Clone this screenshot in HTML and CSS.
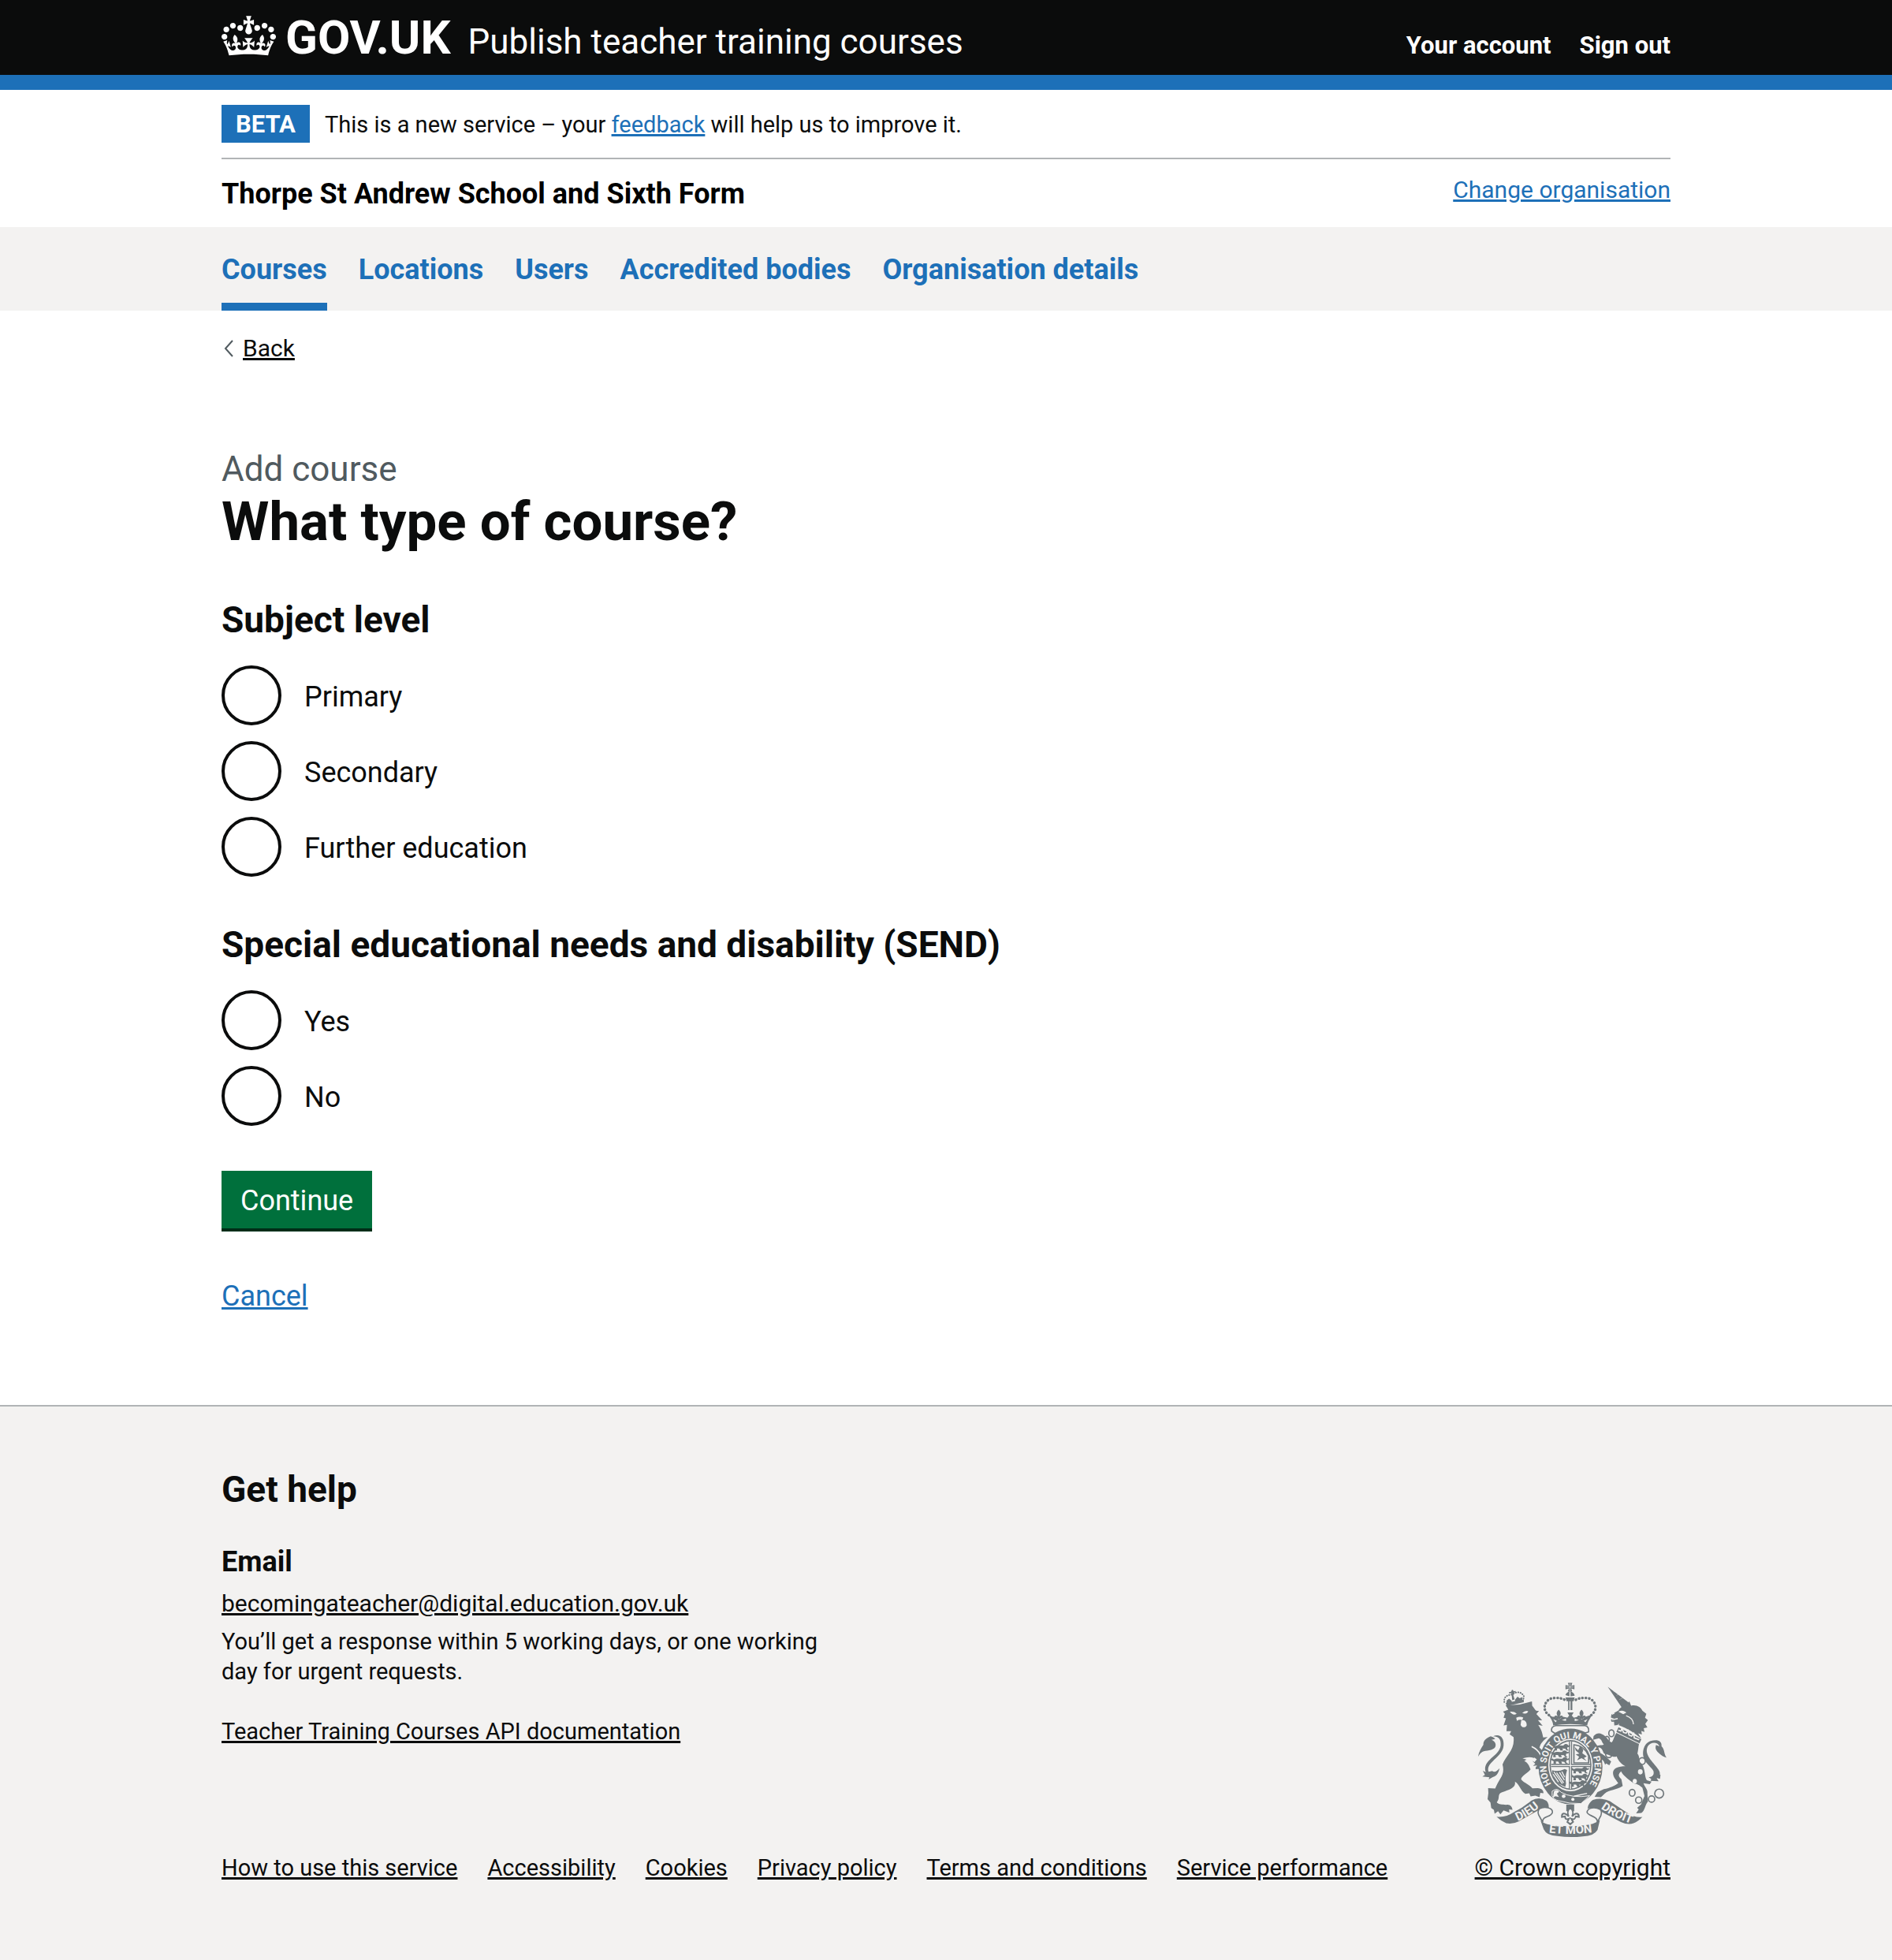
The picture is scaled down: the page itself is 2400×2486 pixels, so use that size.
FILE: index.html
```html
<!DOCTYPE html>
<html lang="en">
<head>
<meta charset="utf-8">
<meta name="viewport" content="width=device-width, initial-scale=1">
<title>What type of course? - Publish teacher training courses</title>
<link rel="stylesheet" href="styles.css">
</head>
<body>
<header class="header">
  <div class="container header-inner">
    <svg class="header-crown" viewBox="0 0 132 97" aria-hidden="true"><path fill="currentColor" fill-rule="evenodd" d="M25 30.2c3.5 1.5 7.7-.2 9.1-3.7 1.5-3.6-.2-7.8-3.9-9.2-3.6-1.4-7.6.3-9.1 3.9-1.4 3.5.3 7.5 3.9 9zM9 39.5c3.6 1.5 7.8-.2 9.2-3.7 1.5-3.6-.2-7.8-3.9-9.1-3.6-1.5-7.6.2-9.1 3.8-1.4 3.5.3 7.5 3.8 9zM4.4 57.2c3.5 1.5 7.7-.2 9.1-3.8 1.5-3.6-.2-7.7-3.9-9.1-3.5-1.5-7.6.3-9.1 3.8-1.4 3.5.3 7.6 3.9 9.1zm38.3-21.4c3.5 1.5 7.7-.2 9.1-3.8 1.5-3.6-.2-7.7-3.9-9.1-3.6-1.5-7.6.3-9.1 3.8-1.3 3.6.4 7.7 3.9 9.1zm64.4-5.6c-3.6 1.5-7.8-.2-9.1-3.7-1.5-3.6.2-7.8 3.8-9.2 3.6-1.4 7.7.3 9.2 3.9 1.3 3.5-.4 7.5-3.9 9zm15.9 9.3c-3.6 1.5-7.7-.2-9.1-3.7-1.5-3.6.2-7.8 3.7-9.1 3.6-1.5 7.7.2 9.2 3.8 1.5 3.5-.3 7.5-3.8 9zm4.7 17.7c-3.6 1.5-7.8-.2-9.2-3.8-1.5-3.6.2-7.7 3.9-9.1 3.6-1.5 7.7.3 9.2 3.8 1.3 3.5-.4 7.6-3.9 9.1zM89.3 35.8c-3.6 1.5-7.8-.2-9.2-3.8-1.4-3.6.2-7.7 3.9-9.1 3.6-1.5 7.7.3 9.2 3.8 1.4 3.6-.3 7.7-3.9 9.1zM69.7 17.7l8.9 4.7V9.3l-8.9 2.8c-.2-.3-.5-.6-.9-.9L72.4 0H59.6l3.5 11.2c-.3.3-.6.5-.9.9l-8.8-2.8v13.1l8.8-4.7c.3.3.6.7.9.9l-5 15.4v.1c-.2.8-.4 1.6-.4 2.4 0 4.1 3.1 7.5 7 8.1h.2c.3 0 .7.1 1 .1.4 0 .7 0 1-.1h.2c4-.6 7.1-4.1 7.1-8.1 0-.8-.1-1.7-.4-2.4V34l-5.1-15.4c.4-.2.7-.6 1-.9zM66 92.8c16.9 0 32.8 1.1 47.1 3.2 4-16.9 8.9-26.7 14-33.5l-9.6-3.4c1 4.9 1.1 7.2 0 10.2-1.5-1.4-3-4.3-4.2-8.7L108.6 76c2.8-2 5-3.2 7.5-3.3-4.4 9.4-10 11.9-13.6 11.2-4.3-.8-6.3-4.6-5.6-7.9 1-4.7 5.7-5.9 8-.5 4.3-8.7-3-11.4-7.6-8.8 7.1-7.2 7.9-13.5 2.1-21.1-8 6.1-8.1 12.3-4.5 20.8-4.7-5.4-12.1-2.5-9.5 6.2 3.4-5.2 7.9-2 7.2 3.1-.6 4.3-6.4 7.8-13.5 7.2-10.3-.9-10.9-8-11.2-13.8 2.5-.5 7.1 1.8 11 7.3L80.2 60c-4.1 4.4-8 5.3-12.3 5.4 1.4-4.4 8-11.6 8-11.6H55.5s6.4 7.2 7.9 11.6c-4.2-.1-8-1-12.3-5.4l1.4 16.4c3.9-5.5 8.5-7.7 10.9-7.3-.3 5.8-.9 12.8-11.1 13.8-7.2.6-12.9-2.9-13.5-7.2-.7-5 3.8-8.3 7.1-3.1 2.7-8.7-4.6-11.6-9.4-6.2 3.7-8.5 3.6-14.7-4.6-20.8-5.8 7.6-5 13.9 2.2 21.1-4.7-2.6-11.9.1-7.7 8.8 2.3-5.5 7.1-4.2 8.1.5.7 3.3-1.3 7.1-5.7 7.9-3.5.7-9-1.8-13.5-11.2 2.5.1 4.7 1.3 7.5 3.3l-4.7-15.4c-1.2 4.4-2.7 7.2-4.3 8.7-1.1-3-.9-5.3 0-10.2l-9.5 3.4c5 6.9 9.9 16.7 14 33.5 14.8-2.1 30.8-3.2 47.7-3.2z"/></svg>
    <a class="header-logo" href="#">GOV.UK</a>
    <a class="header-service" href="#">Publish teacher training courses</a>
    <nav class="header-nav" aria-label="Account">
      <a href="#">Your account</a>
      <a href="#">Sign out</a>
    </nav>
  </div>
</header>

<div class="container">
  <div class="phase">
    <strong class="phase-tag">BETA</strong>
    <span>This is a new service – your <a class="link" href="#">feedback</a> will help us to improve it.</span>
  </div>
  <div class="organisation">
    <span class="organisation-name">Thorpe St Andrew School and Sixth Form</span>
    <a class="link organisation-change" href="#">Change organisation</a>
  </div>
</div>

<nav class="primary-nav" aria-label="Primary">
  <ul class="container primary-nav-list">
    <li><a class="primary-nav-link is-current" href="#" aria-current="page">Courses</a></li>
    <li><a class="primary-nav-link" href="#">Locations</a></li>
    <li><a class="primary-nav-link" href="#">Users</a></li>
    <li><a class="primary-nav-link" href="#">Accredited bodies</a></li>
    <li><a class="primary-nav-link" href="#">Organisation details</a></li>
  </ul>
</nav>

<div class="container main-wrapper">
  <div class="back">
    <svg class="back-icon" viewBox="0 0 12 22" aria-hidden="true"><path d="M11 1 2 11l9 10" fill="none" stroke="currentColor" stroke-width="2"/></svg>
    <a class="link link-dark" href="#">Back</a>
  </div>
  <main>
    <form>
      <h1 class="title"><span class="title-caption">Add course</span>What type of course?</h1>
      <fieldset class="fieldset">
        <legend class="legend">Subject level</legend>
        <div class="radios">
          <div class="radio"><input type="radio" name="level" id="primary"><label for="primary">Primary</label></div>
          <div class="radio"><input type="radio" name="level" id="secondary"><label for="secondary">Secondary</label></div>
          <div class="radio"><input type="radio" name="level" id="further"><label for="further">Further education</label></div>
        </div>
      </fieldset>
      <fieldset class="fieldset">
        <legend class="legend">Special educational needs and disability (SEND)</legend>
        <div class="radios">
          <div class="radio"><input type="radio" name="send" id="send-yes"><label for="send-yes">Yes</label></div>
          <div class="radio"><input type="radio" name="send" id="send-no"><label for="send-no">No</label></div>
        </div>
      </fieldset>
      <button class="button" type="submit">Continue</button>
      <p class="cancel"><a class="link" href="#">Cancel</a></p>
    </form>
  </main>
</div>

<footer class="footer">
  <div class="container footer-grid">
    <div class="footer-main">
      <h2 class="footer-title">Get help</h2>
      <h3 class="footer-subtitle">Email</h3>
      <ul class="footer-list">
        <li class="footer-email"><a class="link link-dark" href="#">becomingateacher@digital.education.gov.uk</a></li>
        <li>You’ll get a response within 5 working days, or one working day for urgent requests.</li>
      </ul>
      <p class="footer-api"><a class="link link-dark" href="#">Teacher Training Courses API documentation</a></p>
      <ul class="footer-links">
        <li><a class="link link-dark" href="#">How to use this service</a></li>
        <li><a class="link link-dark" href="#">Accessibility</a></li>
        <li><a class="link link-dark" href="#">Cookies</a></li>
        <li><a class="link link-dark" href="#">Privacy policy</a></li>
        <li><a class="link link-dark" href="#">Terms and conditions</a></li>
        <li><a class="link link-dark" href="#">Service performance</a></li>
      </ul>
    </div>
    <div class="footer-copyright">
      <svg class="arms" viewBox="72 44 718 588" aria-hidden="true">
        <defs>
          <path id="motto-left" d="M207 577Q264 558 318 508"/>
          <path id="motto-mid" d="M330 614Q424 627 518 613"/>
          <path id="motto-right" d="M531 517Q583 558 665 584"/>
          <path id="garter-text" d="M362 444A92 108 0 1 1 486 444"/>
          <g id="lily"><path d="M0-19C-11-9-8 0-3 6C-13 0-19 5-15 15C-11 10-7 11-5 17H5C7 11 11 10 15 15C19 5 13 0 3 6C8 0 11-9 0-19Z"/></g>
          <path id="passant" d="M-33-3C-37-10-28-12-25-6C-15-12-3-9 8-9C14-18 24-16 27-9L34-11L32-4L24-3L22 4L30 10H20L15 3L4 2L7 10H-3L-8 2L-17 2L-16 10H-26L-25 1Z"/>
        </defs>
        <g fill="currentColor" stroke="none">
          <!-- lion: tail, body, legs -->
          <path d="M72 326C74 310 83 295 92 281C91 265 103 257 113 252L120 249L128 252L137 258C132 262 127 261 123 262C137 267 142 279 137 290C129 304 101 302 88 308C81 312 77 319 72 326Z"/>
          <path d="M129 249C155 237 172 255 169 285C165 330 99 348 112 384L126 381C135 389 147 378 154 370C150 384 146 399 128 404L112 413L115 405L88 402L98 396L90 380L101 385C86 338 154 325 158 283C160 260 149 249 129 249Z"/>
          <path d="M177 131L230 128L277 116L278 132C290 144 287 153 304 152L294 164L316 188L300 187L318 209L301 205C315 225 317 239 320 253L337 252C322 264 309 276 306 292C322 306 330 322 336 338L329 386L318 380L309 385L304 373L291 373L293 359L283 352L300 340L287 330L275 338L268 329L248 343C262 349 266 360 272 375C258 392 236 400 236 413C249 428 266 431 279 447L299 446C315 447 321 455 321 466L309 464L306 481L290 475L272 478L267 466L252 468C231 453 232 433 212 421C218 445 191 452 163 462C143 469 157 486 143 500C151 511 163 507 179 510C194 507 202 517 203 529L190 527L191 539L169 531L157 546L148 534L135 544L132 529L122 522L119 501L108 488L111 465L110 446L137 448C152 408 176 397 165 356C177 322 213 302 207 252L192 241L198 229L180 229L182 205L169 207L178 180L169 178L174 162L167 155L187 147Z"/>
          <path d="M276 288C294 296 303 306 311 321" fill="none" stroke="#f3f2f1" stroke-width="5"/>
          <g fill="#f3f2f1"><path d="M193 155Q209 153 219 162Q207 173 193 155ZM240 160Q252 148 263 153Q258 166 240 160ZM217 178Q231 171 244 177L240 187Q229 183 220 190ZM236 189C249 183 258 195 257 207C253 218 237 216 234 205Z"/><path d="M241 333Q278 320 299 341Q317 359 295 365Q272 357 280 346Q265 340 241 333Z"/></g>
          <path d="M295 337L287 347L278 342L290 354L281 361L296 360L292 375L309 362L318 373L323 338L304 327Z"/>
          <!-- lion's crown -->
          <path d="M172 118Q168 93 199 90Q231 70 246 95L246 110L181 126Z" fill="#f3f2f1"/>
          <path d="M177 122L246 108L246 119L181 134Z"/>
          <path d="M172 118Q168 93 199 90Q231 70 246 95Q247 103 242 110" fill="none" stroke="currentColor" stroke-width="6" stroke-dasharray="1 8" stroke-linecap="round"/>
          <path d="M198 77L204 73L209 79L204 85L211 108L202 111ZM181 112L190 105L199 113L201 118L180 123ZM213 109L222 98L230 104L241 99L240 112L212 118Z"/>
          <path d="M190 83L215 78M202 72L206 91" stroke="currentColor" stroke-width="5"/>

          <!-- unicorn: horn, head, mane, body, tail -->
          <path d="M566 60L650 123L622 143Z"/>
          <path d="M588 79L599 73M599 93L614 84M610 109L630 99" stroke="#f3f2f1" stroke-width="1"/>
          <path d="M648 115L655 132C675 127 693 138 698 151L713 163L708 178L719 187L709 201L717 215L703 218L706 232L694 228L696 242L682 237L694 258C666 234 638 217 607 206L611 199L603 206L591 207L590 193H580L578 185L590 181L578 177L580 165L607 150C616 135 631 131 642 128Z"/>
          <path d="M582 165L592 160M582 186L604 181M611 155Q623 150 633 158L625 162Z" stroke="#f3f2f1" stroke-width="4" fill="#f3f2f1"/>
          <path d="M636 170Q663 179 664 203" fill="none" stroke="#f3f2f1" stroke-width="4"/>
          <path d="M607 214L694 260L687 276L599 232Z"/>
          <path d="M606 225L616 229L620 218L626 234L636 237L643 227L647 244L657 248L665 238L667 255L686 262" fill="none" stroke="#f3f2f1" stroke-width="5"/>
          <path d="M599 236L685 278C682 292 682 303 679 315C690 327 682 342 693 351C711 371 705 410 717 417L733 421L726 431L702 427C708 444 719 450 717 466L719 498C708 508 709 531 694 541L674 542L684 527L678 521L693 508L706 476L698 445C679 425 670 433 660 424C638 407 625 398 617 382C604 393 606 402 618 412L623 438C600 454 571 452 554 467L540 481L516 479L527 461L551 450C576 444 591 438 606 427C592 409 586 401 586 387C587 369 609 363 633 363C612 350 604 337 600 325C585 331 574 318 555 316C547 315 548 291 530 291L534 311C554 319 565 333 579 345L572 359L560 352L556 357L551 345C538 327 519 325 520 310L519 288C536 279 543 284 551 280C541 268 545 262 532 256L510 262L512 248C522 235 536 236 543 240C560 246 567 266 581 272C588 265 590 249 599 236Z"/>
          <path d="M706 338C695 316 700 277 729 267C755 259 773 266 771 287C784 298 779 316 790 330C774 326 766 317 755 307C747 299 747 291 750 282L763 287C755 267 727 271 718 288C702 323 746 351 763 382C771 400 751 411 739 416L722 405C736 404 744 396 740 381C733 367 716 357 706 338Z"/>
          <path d="M752 388L767 396L765 411L751 407L760 420L729 418L737 399Z"/>
          <!-- chain -->
          <g fill="none" stroke="currentColor" stroke-width="5"><ellipse cx="580" cy="237" rx="10" ry="13"/><ellipse cx="563" cy="261" rx="9" ry="12"/><circle cx="570" cy="318" r="12"/><ellipse cx="697" cy="343" rx="12" ry="13"/><ellipse cx="659" cy="464" rx="11" ry="13"/><circle cx="684" cy="492" r="12"/><circle cx="733" cy="488" r="12"/><circle cx="762" cy="467" r="17"/></g>
          <g fill="#f3f2f1"><ellipse cx="690" cy="384" rx="9" ry="10"/><ellipse cx="669" cy="420" rx="8" ry="9"/><circle cx="697" cy="343" r="8"/></g>

          <!-- garter and shield -->
          <ellipse cx="424" cy="364" rx="122" ry="144"/>
          <ellipse cx="424" cy="358" rx="85" ry="100" fill="#f3f2f1"/>
          <ellipse cx="424" cy="358" rx="80" ry="95"/>
          <ellipse cx="424" cy="358" rx="75" ry="90" fill="#f3f2f1"/>
          <path d="M350 360H499M424 268V450" stroke="currentColor" stroke-width="12"/>
          <path d="M350 360H499M424 268V450" stroke="#f3f2f1" stroke-width="4"/>
          <use href="#passant" transform="translate(389 293)"/><use href="#passant" transform="translate(384 318)"/><use href="#passant" transform="translate(385 343)"/>
          <use href="#passant" transform="translate(461 380)"/><use href="#passant" transform="translate(461 406)"/><use href="#passant" transform="translate(453 431)"/>
          <path d="M437 281Q476 284 493 323V350H437Z" fill="none" stroke="currentColor" stroke-width="5"/>
          <path d="M440 289L453 302L461 286L473 300L469 313L486 325L475 331L486 343L466 332L449 340L457 327L444 318L458 315L444 303Z"/>
          <path d="M354 378Q377 385 402 373L411 377Q402 405 407 429L404 442L378 429Q354 410 354 378Z"/>
          <path d="M361 384L393 429M371 387L398 426M382 386L401 416M391 383L402 405M358 393L378 423" fill="none" stroke="#f3f2f1" stroke-width="4"/>
          <!-- belt -->
          <path d="M354 458Q374 442 388 462Q430 486 497 475L464 505Q420 507 379 494Q361 491 354 475Z" stroke="#f3f2f1" stroke-width="3"/>
          <path d="M361 458Q374 449 381 460L372 467L380 480L366 477L357 483Z" fill="#f3f2f1"/>
          <circle cx="398" cy="477" r="7" fill="#f3f2f1"/><circle cx="433" cy="489" r="6" fill="#f3f2f1"/>
          <path d="M437 477L487 466" stroke="#f3f2f1" stroke-width="4"/>
          <text class="arms-garter"><textPath href="#garter-text" startOffset="50%">HON SOIT QUI MAL Y PENSE</textPath></text>

          <!-- royal crown -->
          <path d="M352 229Q349 211 368 208L479 208Q496 211 493 232L480 236Q424 207 365 238Z" fill="#f3f2f1" stroke="currentColor" stroke-width="5"/>
          <path d="M340 166L355 174L367 174L379 185L396 174L414 178L424 170L436 178L451 174L467 185L481 174L506 166C498 184 489 193 488 207Q424 197 358 207C357 190 347 179 340 166Z"/>
          <g fill="#f3f2f1"><path d="M358 183L372 190L367 195ZM391 187L407 181V190ZM440 181L456 187L440 191ZM475 190L489 183L481 195Z"/></g>
          <use href="#lily" transform="translate(379 166)"/><use href="#lily" transform="translate(466 166)"/>
          <path d="M412 158H436L429 170L438 179L424 176L411 179L419 170Z"/>
          <path d="M342 168C309 144 330 104 360 103Q385 100 405 111M503 168C534 144 516 104 486 103Q461 100 441 111" fill="none" stroke="currentColor" stroke-width="10" stroke-dasharray="1 12" stroke-linecap="round"/>
          <path d="M405 101H440L436 115H409ZM415 115H431V149H415ZM405 92Q408 80 422 78Q438 80 440 94L422 97Z"/>
          <path d="M422 115V149M422 78V98" stroke="#f3f2f1" stroke-width="4"/>
          <path d="M414 45H431L427 56L439 53V70L427 66L430 78H414L418 66L405 70V53L418 56Z"/>
          <path d="M422 48V76M408 61H436" stroke="#f3f2f1" stroke-width="2"/>

          <!-- scrolls -->
          <path d="M408 509H438V534H408Z"/>
          <path d="M423 522C409 532 413 544 417 554C401 538 390 541 391 556L403 554Q404 569 418 563L412 575L423 584L434 575L427 563Q441 569 444 554L456 556C456 541 444 538 430 554C434 544 438 532 423 522Z" fill="#f3f2f1" stroke="currentColor" stroke-width="6"/>
          <path d="M142 555Q178 559 208 538Q247 518 274 494Q304 477 332 494Q343 504 341 525Q329 517 313 524L226 573Q203 585 179 580Q160 572 142 555Z"/>
          <path d="M305 525C325 514 358 521 355 539C349 559 315 550 318 576L303 549C298 538 301 531 305 525Z" fill="#f3f2f1" stroke="currentColor" stroke-width="5"/>
          <path d="M698 556Q670 560 640 540L574 496Q545 481 509 491Q492 502 489 524Q503 519 523 526L616 575Q644 588 664 580Q682 574 698 556Z"/>
          <path d="M537 527C515 516 490 521 487 537C488 553 530 552 526 577L540 550C544 538 542 532 537 527Z" fill="#f3f2f1" stroke="currentColor" stroke-width="5"/>
          <path d="M310 570Q330 588 370 588Q424 595 474 588Q512 586 536 568L527 605Q514 628 471 630Q424 636 374 629Q333 627 322 603Z"/>
        </g>
        <g class="arms-motto">
          <text><textPath href="#motto-left" startOffset="50%">DIEU</textPath></text>
          <text><textPath href="#motto-mid" startOffset="50%">ET MON</textPath></text>
          <text><textPath href="#motto-right" startOffset="50%">DROIT</textPath></text>
        </g>
      </svg>
      <a class="link link-dark" href="#">© Crown copyright</a>
    </div>
  </div>
</footer>
</body>
</html>
```
FILE: styles.css
```css
:root {
  --blue: #1d70b8;
  --black: #0b0c0c;
  --grey: #f3f2f1;
  --border: #b1b4b6;
}

* { box-sizing: border-box; }

body {
  margin: 0;
  background: #fff;
  color: var(--black);
  font-family: Roboto, "Liberation Sans", sans-serif;
  font-size: 30px;
  line-height: 38px;
}

h1, h2, h3, p, ul, fieldset { margin: 0; padding: 0; border: 0; }
ul { list-style: none; }

.container {
  width: calc(100% - 60px);
  max-width: 1838px;
  margin: 0 auto;
}

.link {
  color: var(--blue);
  text-decoration: underline;
  text-decoration-thickness: 3px;
  text-underline-offset: 2px;
}
.link-dark { color: var(--black); }

/* Header */
.header {
  background: var(--black);
  border-bottom: 19px solid var(--blue);
  color: #fff;
}
.header a { color: #fff; text-decoration: none; }
.header-inner {
  display: flex;
  flex-wrap: wrap;
  align-items: baseline;
  padding: 20px 0 18px;
}
.header-crown {
  align-self: flex-start;
  width: 69px;
  height: 51px;
  margin-right: 12px;
}
.header-logo {
  margin-right: 22px;
  font-size: 60px;
  font-weight: 700;
  line-height: 56px;
}
.header-service { font-size: 44px; line-height: 48px; }
.header-nav {
  display: flex;
  gap: 36px;
  margin-left: auto;
  font-size: 31px;
  font-weight: 700;
}

/* Phase banner and organisation */
.phase {
  display: flex;
  align-items: center;
  gap: 19px;
  padding: 19px 0;
  border-bottom: 2px solid var(--border);
  font-size: 29px;
}
.phase-tag {
  padding: 6px 18px 4px;
  background: var(--blue);
  color: #fff;
  font-size: 31px;
}
.phase span { padding-top: 2px; }
.organisation {
  display: flex;
  justify-content: space-between;
  align-items: flex-start;
  padding: 20px 0 18px;
}
.organisation-name {
  color: #000;
  font-size: 36px;
  font-weight: 700;
  line-height: 48px;
}

/* Primary navigation */
.primary-nav { background: var(--grey); }
.primary-nav-list {
  display: flex;
  flex-wrap: wrap;
  gap: 0 40px;
  padding-top: 30px;
}
.primary-nav-link {
  display: block;
  padding-bottom: 18px;
  border-bottom: 10px solid transparent;
  color: var(--blue);
  font-size: 36px;
  font-weight: 700;
  line-height: 48px;
  text-decoration: none;
}
.primary-nav-link.is-current { border-color: var(--blue); }

/* Main content */
.main-wrapper { padding: 29px 0 114px; }
.back {
  display: flex;
  align-items: center;
  gap: 12px;
  padding-left: 3px;
  margin-bottom: 106px;
}
.back-icon { width: 12px; height: 22px; color: #505a5f; }

.title { font-size: 69px; line-height: 76px; }
.title-caption {
  display: block;
  color: #505a5f;
  font-size: 44px;
  font-weight: 400;
  line-height: 57px;
}

.fieldset { margin: 58px 0 57px; }
.legend {
  padding: 0;
  margin-bottom: 29px;
  font-size: 46px;
  font-weight: 700;
  line-height: 57px;
}
.radios { display: grid; gap: 20px; }
.radio { display: flex; }
.radio input {
  appearance: none;
  width: 76px;
  height: 76px;
  margin: 0;
  border: 4px solid var(--black);
  border-radius: 50%;
  background: #fff;
}
.radio input:checked { box-shadow: inset 0 0 0 15px #fff, inset 0 0 0 40px var(--black); }
.radio label {
  padding: 16px 29px 12px;
  font-size: 36px;
  line-height: 48px;
}

.button {
  display: block;
  padding: 14px 24px 11px;
  border: 0;
  background: #00703c;
  box-shadow: 0 4px 0 #002d18;
  color: #fff;
  font-family: inherit;
  font-size: 36px;
  line-height: 48px;
}
.cancel {
  margin-top: 62px;
  font-size: 36px;
  line-height: 48px;
}

/* Footer */
.footer {
  padding: 77px 0 98px;
  border-top: 2px solid var(--border);
  background: var(--grey);
}
.footer-grid {
  display: flex;
  justify-content: space-between;
}
.footer-main { font-size: 29px; }
.footer-title { font-size: 46px; line-height: 57px; }
.footer-subtitle {
  margin-top: 39px;
  font-size: 36px;
  line-height: 48px;
}
.footer-list {
  display: grid;
  gap: 10px;
  max-width: 800px;
  margin: 10px 0 38px;
}
.footer-email { font-size: 30px; }
.footer-links {
  display: flex;
  flex-wrap: wrap;
  gap: 0 38px;
  margin-top: 135px;
}
.footer-copyright {
  display: flex;
  flex-direction: column;
  align-items: center;
  align-self: flex-end;
  gap: 20px;
  white-space: nowrap;
}
.arms { width: 239px; height: 196px; overflow: visible; color: #6f777b; }
.arms text { fill: var(--grey); font-weight: 700; text-anchor: middle; }
.arms-garter { font-size: 35px; }
.arms-motto { font-size: 45px; }
```
